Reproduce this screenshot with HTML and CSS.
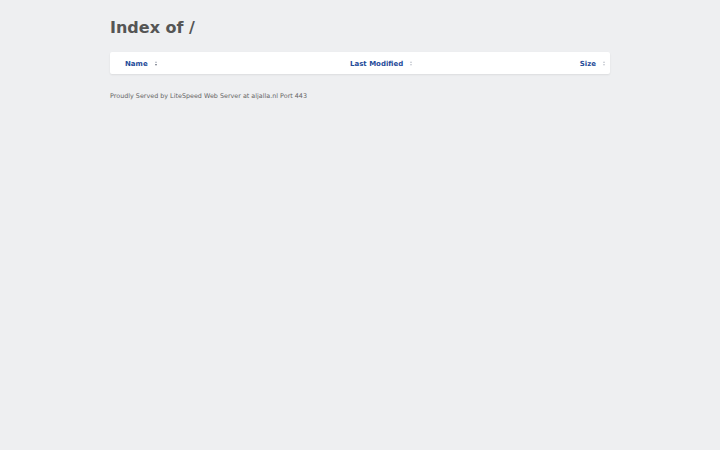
FILE: index.html
```html
<!DOCTYPE html>
<html>
<head>
<meta charset="utf-8">
<title>Index of /</title>
<link rel="stylesheet" href="styles.css">
</head>
<body>
<div class="wrap">
  <h1 class="title">Index of /</h1>
  <div class="table">
    <div class="head">
      <div class="col col-name"><a class="sort" href="#">Name</a><span class="arrows active"><i class="up"></i><i class="down"></i></span></div>
      <div class="col col-mod"><a class="sort" href="#">Last Modified</a><span class="arrows"><i class="up"></i><i class="down"></i></span></div>
      <div class="col col-size"><a class="sort" href="#">Size</a><span class="arrows"><i class="up"></i><i class="down"></i></span></div>
    </div>
  </div>
  <p class="footer">Proudly Served by LiteSpeed Web Server at aljalla.nl Port 443</p>
</div>
</body>
</html>
```
FILE: styles.css
```css
html, body {
  margin: 0;
  padding: 0;
  background: #eeeff1;
  font-family: "DejaVu Sans", sans-serif;
}
.wrap {
  width: 500px;
  margin: 0 auto;
  padding-top: 17px;
}
.title {
  margin: 0;
  font-size: 16px;
  font-weight: bold;
  color: #555;
  line-height: 22px;
}
.table {
  margin-top: 13px;
  background: #fff;
  border-radius: 2px;
  box-shadow: 0 1px 2px rgba(0,0,0,0.08);
}
.head {
  box-sizing: border-box;
  display: flex;
  align-items: center;
  height: 22px;
  padding: 1px 5px 0 15px;
}
.col {
  display: flex;
  align-items: center;
}
.col-name { width: 225px; }
.col-mod { flex: 1; }
.col-size { justify-content: flex-end; }
.sort {
  font-size: 7px;
  font-weight: bold;
  color: #1f4b99;
  text-decoration: none;
}
.arrows {
  display: inline-flex;
  flex-direction: column;
  gap: 1px;
  margin-left: 7px;
}
.arrows i {
  display: block;
  width: 0;
  height: 0;
  border-left: 1.5px solid transparent;
  border-right: 1.5px solid transparent;
}
.arrows .up { border-bottom: 2px solid #c4c8d0; }
.arrows .down { border-top: 2px solid #c4c8d0; }
.arrows.active .up { border-bottom-color: #b0b5c0; }
.arrows.active .down { border-top-color: #6b7280; }
.footer {
  margin: 18px 0 0;
  font-size: 6.4px;
  color: #666;
}
```
